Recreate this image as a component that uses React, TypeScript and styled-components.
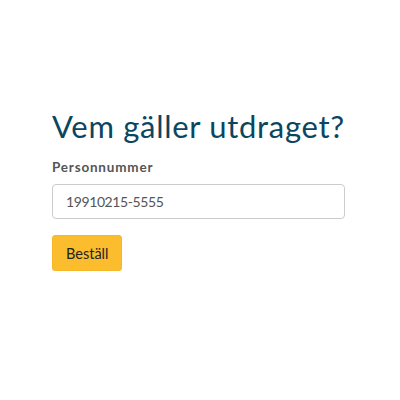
import styled, { createGlobalStyle } from "styled-components"

const Global = createGlobalStyle`
  html, body {
    margin: 0;
    padding: 0;
    background: #fff;
  }
  body {
    font-family: "Lato", "Open Sans", sans-serif;
  }
`

export default function App() {
  return (
    <>
      <Global />
      <Page>
        <Title>Vem gäller utdraget?</Title>
        <Field>
          <Label htmlFor="pnr">Personnummer</Label>
          <Input id="pnr" defaultValue="19910215-5555" />
        </Field>
        <Button>Beställ</Button>
      </Page>
    </>
  )
}

const Page = styled.main`
  display: flex;
  flex-direction: column;
  align-items: flex-start;
  padding: 108px 55px 0 52px;
`

const Title = styled.h1`
  margin: 0 0 14px;
  font-size: 31px;
  font-weight: 400;
  line-height: 1.2;
  color: #0b4661;
  letter-spacing: 0.7px;
`

const Field = styled.div`
  display: flex;
  flex-direction: column;
  align-self: stretch;
  gap: 9px;
  margin-bottom: 16px;
`

const Label = styled.label`
  font-size: 13.5px;
  font-weight: 700;
  color: #555;
  letter-spacing: 0.8px;
`

const Input = styled.input`
  box-sizing: border-box;
  height: 35px;
  width: 100%;
  padding: 0 13px;
  border: 1px solid #ccc;
  border-radius: 4px;
  font-family: inherit;
  font-size: 14px;
  letter-spacing: -0.4px;
  color: #555;
  outline: none;
`

const Button = styled.button`
  box-sizing: border-box;
  height: 36px;
  padding: 0 13px;
  border: 1px solid #f6b828;
  border-radius: 3px;
  background: #fbbd2e;
  font-family: inherit;
  font-size: 14.5px;
  color: #222;
  cursor: pointer;
`
